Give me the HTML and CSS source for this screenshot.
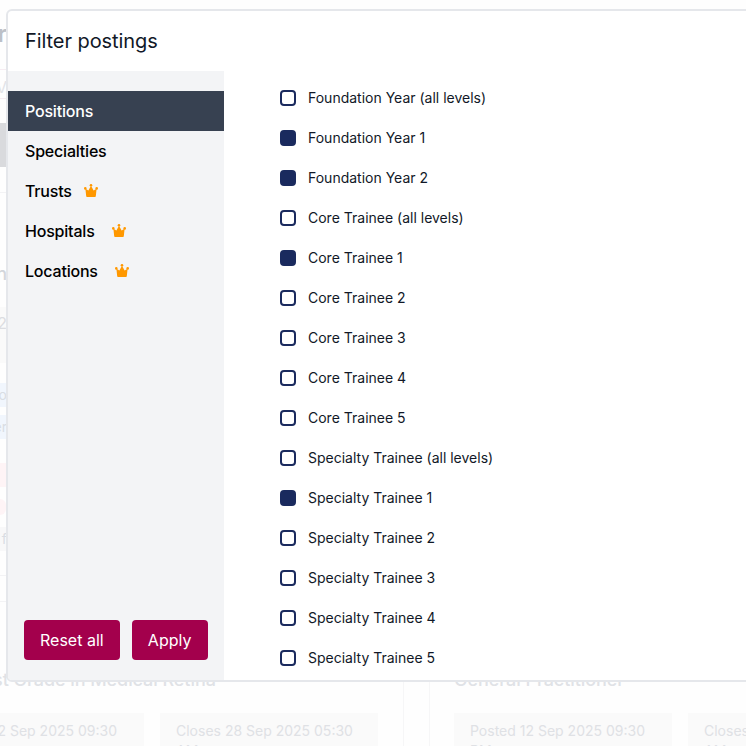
FILE: index.html
```html
<!DOCTYPE html>
<html lang="en">
<head>
<meta charset="utf-8">
<title>Filter postings</title>
<link rel="stylesheet" href="styles.css">
</head>
<body>
<div class="page">
  <div class="strip">
    <div class="s s-title"><span>r</span></div>
    <div class="s s-rule-pink s-r1"></div>
    <div class="s s-v"><span>V</span></div>
    <div class="s s-rule-pink s-r2"></div>
    <div class="s s-block"></div>
    <div class="s s-rule s-r3"></div>
    <div class="s s-n"><span>n</span></div>
    <div class="s s-box"><span>2</span></div>
    <div class="s s-chip s-blue s-c1"><span>o</span></div>
    <div class="s s-chip s-blue s-c2"><span>er</span></div>
    <div class="s s-chip s-pink s-c2"></div>
    <div class="s s-dot"></div>
    <div class="s s-chip s-gray s-c3"><span>f</span></div>
    <div class="s s-rule s-r4"></div>
    <div class="s s-rule s-r5"></div>
  </div>
  <div class="lower">
    <section class="job">
      <h2 class="job-title">Specialist Grade in Medical Retina</h2>
      <div class="job-dates">
        <div class="date">Posted 12 Sep 2025 09:30 PM</div>
        <div class="date">Closes 28 Sep 2025 05:30 AM</div>
      </div>
    </section>
    <section class="job job-second">
      <h2 class="job-title">General Practitioner</h2>
      <div class="job-dates">
        <div class="date">Posted 12 Sep 2025 09:30 PM</div>
        <div class="date">Closes 28 Sep 2025 05:30 AM</div>
      </div>
    </section>
  </div>
</div>

<div class="modal">
  <header class="modal-head">Filter postings</header>
  <div class="modal-body">
    <aside class="side">
      <nav class="nav">
        <a class="nav-item active">Positions</a>
        <a class="nav-item">Specialties</a>
        <a class="nav-item">Trusts<svg class="crown" viewBox="0 0 14 13"><use href="#crown"/></svg></a>
        <a class="nav-item">Hospitals<svg class="crown crown-far" viewBox="0 0 14 13"><use href="#crown"/></svg></a>
        <a class="nav-item">Locations<svg class="crown crown-far" viewBox="0 0 14 13"><use href="#crown"/></svg></a>
      </nav>
      <div class="actions">
        <button class="btn">Reset all</button>
        <button class="btn btn-apply">Apply</button>
      </div>
    </aside>
    <ul class="options">
      <li class="option"><span class="box"></span><span class="label">Foundation Year (all levels)</span></li>
      <li class="option"><span class="box on"></span><span class="label">Foundation Year 1</span></li>
      <li class="option"><span class="box on"></span><span class="label">Foundation Year 2</span></li>
      <li class="option"><span class="box"></span><span class="label">Core Trainee (all levels)</span></li>
      <li class="option"><span class="box on"></span><span class="label">Core Trainee 1</span></li>
      <li class="option"><span class="box"></span><span class="label">Core Trainee 2</span></li>
      <li class="option"><span class="box"></span><span class="label">Core Trainee 3</span></li>
      <li class="option"><span class="box"></span><span class="label">Core Trainee 4</span></li>
      <li class="option"><span class="box"></span><span class="label">Core Trainee 5</span></li>
      <li class="option"><span class="box"></span><span class="label">Specialty Trainee (all levels)</span></li>
      <li class="option"><span class="box on"></span><span class="label">Specialty Trainee 1</span></li>
      <li class="option"><span class="box"></span><span class="label">Specialty Trainee 2</span></li>
      <li class="option"><span class="box"></span><span class="label">Specialty Trainee 3</span></li>
      <li class="option"><span class="box"></span><span class="label">Specialty Trainee 4</span></li>
      <li class="option"><span class="box"></span><span class="label">Specialty Trainee 5</span></li>
    </ul>
  </div>
</div>

<svg class="defs" width="0" height="0" aria-hidden="true">
  <symbol id="crown" viewBox="0 0 14 13">
    <circle cx="1.3" cy="4.4" r="1.3"/>
    <circle cx="7" cy="1.3" r="1.3"/>
    <circle cx="12.7" cy="4.4" r="1.3"/>
    <path d="M7 1.8 9.6 6.6 12.6 4.8 11.8 12.2Q11.7 13 11 13H3Q2.3 13 2.2 12.2L1.4 4.8 4.4 6.6Z"/>
  </symbol>
</svg>
</body>
</html>
```
FILE: styles.css
```css
* { box-sizing: border-box; }
html, body { margin: 0; height: 100%; }
body {
  width: 746px;
  height: 746px;
  overflow: hidden;
  position: relative;
  background: #fefefe;
  font-family: Inter, "Liberation Sans", sans-serif;
  color: #111827;
}
.defs { position: absolute; }

/* dimmed page behind the dialog */
.page { height: 746px; overflow: hidden; }
.strip { width: 7px; height: 666px; overflow: hidden; }
.s { display: flex; justify-content: flex-end; white-space: nowrap; }
.s-title { margin-top: 20px; height: 28px; line-height: 28px; font-size: 24px; font-weight: 600; color: #bcc0c7; }
.s-rule-pink { height: 1px; background: #f6edf2; }
.s-rule { height: 1px; background: #f3f3f5; }
.s-r1 { margin-top: 21px; }
.s-v { margin-top: 6px; height: 22px; line-height: 22px; font-size: 16px; color: #e2e4e8; }
.s-r2 { margin-top: 0; }
.s-block { margin-top: 24px; height: 44px; background: #d9dadd; }
.s-r3 { margin-top: 25px; }
.s-n { margin-top: 71px; height: 20px; line-height: 20px; font-size: 18px; font-weight: 500; color: #d3d6db; }
.s-box { margin-top: 23px; height: 56px; padding-top: 6px; background: #fafafa; line-height: 20px; font-size: 16px; color: #dcdde1; }
.s-chip { height: 24px; line-height: 24px; font-size: 14px; color: #d9dde3; }
.s-blue { background: #f1f6fd; }
.s-pink { background: #fef4f6; }
.s-gray { background: #f8f8f9; }
.s-c1 { margin-top: 20px; }
.s-c2 { margin-top: 8px; }
.s-blue.s-c2 + .s-pink { margin-top: 24px; }
.s-dot { margin-top: 12px; height: 16px; background: #fef4f6; border-radius: 0 8px 8px 0; width: 6px; }
.s-c3 { margin-top: 12px; }
.s-r4 { margin-top: 24px; }
.s-r5 { margin-top: 25px; }

.lower { display: flex; margin-left: -99px; }
.job { width: 503px; flex: none; padding: 0 25px; border-right: 1px solid #f6f6f7; height: 80px; }
.job-second { width: 400px; margin-left: 25px; padding-left: 24px; border-right: 0; border-left: 1px solid #f6f6f7; }
.job-title { margin: 0; font-size: 18px; line-height: 28px; font-weight: 500; letter-spacing: -0.06px; color: #e0e2e6; }
.job-dates { display: flex; gap: 16px; margin-top: 19px; }
.date { flex: none; width: 218px; padding: 8px 16px; background: #fafafa; font-size: 14px; line-height: 20px; color: #dfe1e5; }

/* dialog */
.modal {
  position: absolute;
  left: 6px;
  top: 9px;
  width: 800px;
  height: 673px;
  background: #fff;
  border: 2px solid #e5e7eb;
  border-radius: 6px;
  display: flex;
  flex-direction: column;
  overflow: hidden;
}
.modal-head { height: 60px; flex: none; padding: 0 17px; line-height: 60px; font-size: 20px; letter-spacing: -0.07px; color: #111827; }
.modal-body { flex: 1; display: flex; min-height: 0; }
.side {
  width: 216px;
  flex: none;
  background: #f3f4f6;
  padding-top: 20px;
  display: flex;
  flex-direction: column;
  justify-content: space-between;
}
.nav-item { height: 40px; padding: 0 17px; display: flex; align-items: center; font-size: 16px; font-weight: 500; letter-spacing: -0.2px; color: #000; }
.nav-item.active { background: #374151; color: #fff; }
.crown { width: 14px; height: 13px; margin-left: 12px; margin-top: -2px; fill: #ff9800; }
.crown-far { margin-left: 17px; }
.actions { display: flex; gap: 12px; padding: 0 16px 20px; }
.btn {
  height: 40px;
  padding: 0 16px;
  border: 0;
  border-radius: 4px;
  background: #a3004c;
  color: #fff;
  font: 400 16px Inter, "Liberation Sans", sans-serif;
}
.btn-apply { width: 76px; }
.options { list-style: none; margin: 0; padding: 7px 0 0 56px; flex: 1; overflow: hidden; }
.option { height: 40px; display: flex; align-items: center; gap: 12px; font-size: 14px; color: #111827; }
.label { margin-top: -2px; }
.box { width: 16px; height: 16px; flex: none; border: 2px solid #1a2a5e; border-radius: 4px; background: #fff; }
.box.on { background: #1a2a5e; }
```
